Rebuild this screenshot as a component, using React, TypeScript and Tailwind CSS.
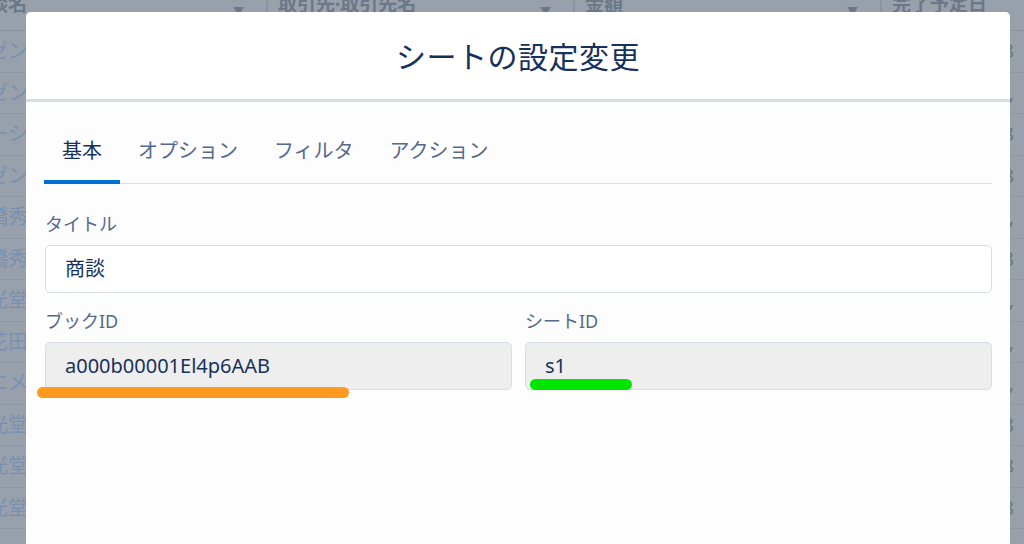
import React from 'react';

const rows = [
  { name: 'アイビゼン', account: '株式会社アイビゼン', amount: '¥3,000,000', tail: '2018' },
  { name: 'アイビゼン', account: '株式会社アイビゼン', amount: '¥1,200,000', tail: '12,' },
  { name: 'アイリーシ', account: '株式会社アイリーシ', amount: '¥800,000', tail: '2018' },
  { name: 'アイビゼン', account: '株式会社アイビゼン', amount: '¥5,000,000', tail: '2018' },
  { name: '高橋秀', account: '高橋秀工業', amount: '¥2,400,000', tail: '12,' },
  { name: '高橋秀', account: '高橋秀工業', amount: '¥650,000', tail: '2018' },
  { name: '陽光堂', account: '株式会社陽光堂', amount: '¥3,300,000', tail: '12,' },
  { name: '佐花田', account: '佐花田商事', amount: '¥900,000', tail: '12,' },
  { name: 'ジエメ', account: 'ジエメ株式会社', amount: '¥1,500,000', tail: '12,' },
  { name: '陽光堂', account: '株式会社陽光堂', amount: '¥3,800,000', tail: '2018' },
  { name: '陽光堂', account: '株式会社陽光堂', amount: '¥2,000,000', tail: '2018' },
  { name: '陽光堂', account: '株式会社陽光堂', amount: '¥3,100,000', tail: '2018' },
];

const font = { fontFamily: '"Noto Sans", "Noto Sans CJK JP", sans-serif' };

function HeaderCell({ label, width, first }: { label: string; width: string; first?: boolean }) {
  return (
    <div
      className={`${width} shrink-0 flex items-start justify-between pr-[22px] border-r-2 border-[#8a939f] ${
        first ? 'pl-[240px]' : 'pl-[10px]'
      }`}
    >
      <span className="text-[19px] font-bold text-[#6c7787] leading-none -mt-[5px] whitespace-nowrap">{label}</span>
      <span className="text-[11px] text-[#6c7787] leading-none mt-[6px]">▼</span>
    </div>
  );
}

function BackgroundTable() {
  return (
    <div className="absolute inset-0 bg-[#97a0ab] overflow-hidden">
      <div className="-ml-[270px] w-[1400px]">
        <div className="flex h-[31px] border-b border-[#8a939f]">
          <HeaderCell label="商談名" width="w-[538px]" first />
          <HeaderCell label="取引先·取引先名" width="w-[307px]" />
          <HeaderCell label="金額" width="w-[307px]" />
          <HeaderCell label="完了予定日" width="w-[200px]" />
        </div>
        {rows.map((r, i) => (
          <div key={i} className="flex h-[41.5px] items-center border-b border-[#8e97a3] text-[20px]">
            <div className="w-[538px] shrink-0 pr-[240px] text-right text-[#7a90b2] whitespace-nowrap">{r.name}</div>
            <div className="w-[307px] shrink-0 pl-[10px] text-[#7a90b2] whitespace-nowrap">{r.account}</div>
            <div className="w-[307px] shrink-0 pl-[10px] text-[#6c7787] whitespace-nowrap">{r.amount}</div>
            <div className="w-[132px] shrink-0 text-right text-[#6c7787] whitespace-nowrap">{r.tail}</div>
          </div>
        ))}
      </div>
    </div>
  );
}

function Field({ label, value, readOnly }: { label: string; value: string; readOnly?: boolean }) {
  return (
    <div className="flex flex-col">
      <label className="text-[18px] leading-[24px] text-[#54698d]">{label}</label>
      <div
        className={`mt-[9px] h-[48px] flex items-center px-[19px] rounded-[5px] border border-[#d8dde6] text-[20px] text-[#16325c] ${
          readOnly ? 'bg-[#eeeeee]' : 'bg-white'
        }`}
      >
        {value}
      </div>
    </div>
  );
}

export default function App() {
  const tabs = ['基本', 'オプション', 'フィルタ', 'アクション'];
  return (
    <div className="relative w-[1024px] h-[544px] overflow-hidden" style={font}>
      <BackgroundTable />

      {/* Modal */}
      <div className="absolute left-[26px] top-[12px] w-[984px] bottom-0 rounded-t-[5px] overflow-hidden bg-[#fdfdfd] flex flex-col">
        <div className="h-[90px] shrink-0 bg-white flex items-center justify-center border-b-[3px] border-[#d8dde6]">
          <h1 className="text-[30px] text-[#16325c] tracking-[0.5px] mt-[2px]">シートの設定変更</h1>
        </div>

        <div className="relative px-[18px] pt-[19px]">
          <div className="flex border-b border-[#d8dde6]">
            {tabs.map((t, i) => (
              <div
                key={t}
                className={`h-[63px] flex items-center px-[18px] text-[20px] -mb-px border-b-[4px] ${
                  i === 0 ? 'text-[#16325c] border-[#0070d2]' : 'text-[#54698d] border-transparent'
                }`}
              >
                {t}
              </div>
            ))}
          </div>

          <div className="mt-[28px] pl-px">
            <Field label="タイトル" value="商談" />
            <div className="grid grid-cols-2 gap-[13px] mt-[16px]">
              <Field label="ブックID" value="a000b00001El4p6AAB" readOnly />
              <Field label="シートID" value="s1" readOnly />
            </div>
          </div>

          {/* highlight marks */}
          <div className="absolute left-[11px] top-[285px] w-[312px] h-[11px] rounded-full bg-[#ff9a1f]" />
          <div className="absolute left-[504px] top-[277px] w-[102px] h-[11px] rounded-full bg-[#00e600]" />
        </div>
      </div>
    </div>
  );
}
